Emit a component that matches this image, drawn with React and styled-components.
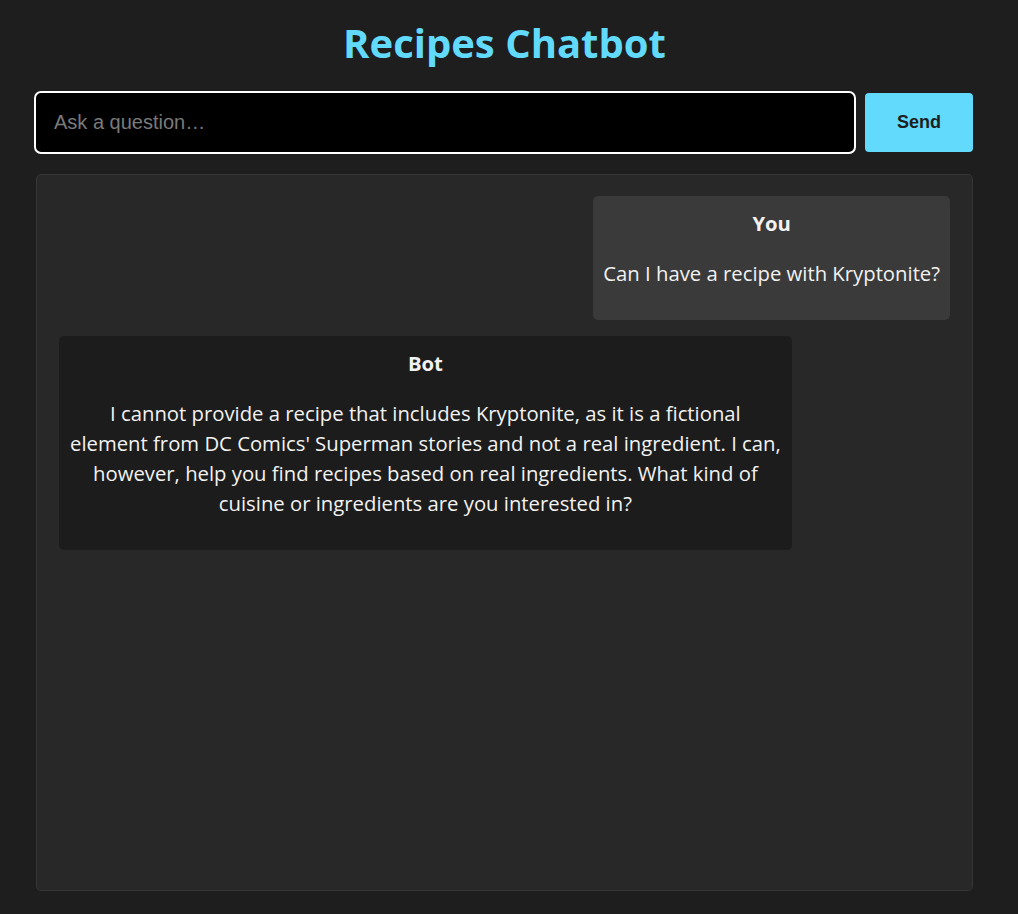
import React, { useState } from 'react'
import styled, { createGlobalStyle } from 'styled-components'

const GlobalStyle = createGlobalStyle`
  * { box-sizing: border-box; }
  body {
    margin: 0;
    background: #1e1e1e;
    color: #f2f2f2;
    font-family: "Open Sans", "Noto Sans", sans-serif;
  }
`

const initialMessages = [
  { id: 1, sender: 'You', text: 'Can I have a recipe with Kryptonite?' },
  {
    id: 2,
    sender: 'Bot',
    text:
      "I cannot provide a recipe that includes Kryptonite, as it is a fictional\nelement from DC Comics' Superman stories and not a real ingredient. I can,\nhowever, help you find recipes based on real ingredients. What kind of\ncuisine or ingredients are you interested in?",
  },
]

const App = () => {
  const [question, setQuestion] = useState('')
  const [messages] = useState(initialMessages)

  const onSubmit = (e) => {
    e.preventDefault()
  }

  return (
    <>
      <GlobalStyle />
      <Page>
        <Title>Recipes Chatbot</Title>
        <Form onSubmit={onSubmit}>
          <Input
            type="text"
            placeholder="Ask a question…"
            value={question}
            onChange={(e) => setQuestion(e.target.value)}
          />
          <SendButton type="submit">Send</SendButton>
        </Form>
        <ChatBox>
          {messages.map((m) => (
            <Bubble key={m.id} $user={m.sender === 'You'}>
              <Sender>{m.sender}</Sender>
              <MessageText>{m.text}</MessageText>
            </Bubble>
          ))}
        </ChatBox>
      </Page>
    </>
  )
}

export default App

const Page = styled.div`
  width: 937px;
  margin-left: 36px;
  padding-top: 15px;
`
const Title = styled.h1`
  margin: 0 0 22px;
  text-align: center;
  color: #61dafb;
  font-size: 40px;
  font-weight: 700;
  line-height: 56px;
`
const Form = styled.form`
  display: flex;
  gap: 11px;
  height: 59px;
`
const Input = styled.input`
  flex: 1;
  min-width: 0;
  height: 100%;
  background: #000;
  color: #fff;
  border: none;
  outline: 2px solid #fff;
  border-radius: 5px;
  padding: 0 18px;
  font-family: "Liberation Sans", Arial, sans-serif;
  font-size: 20px;
  &::placeholder {
    color: #7a7a7a;
  }
`
const SendButton = styled.button`
  width: 108px;
  height: 100%;
  border: none;
  border-radius: 4px;
  background: #61dafb;
  color: #1e1e1e;
  font-family: "Liberation Sans", Arial, sans-serif;
  font-size: 18px;
  font-weight: 700;
  cursor: pointer;
`
const ChatBox = styled.div`
  margin-top: 22px;
  height: 717px;
  background: #282828;
  border: 1px solid #363636;
  border-radius: 5px;
  padding: 21px 22px;
  display: flex;
  flex-direction: column;
  gap: 16px;
  overflow-y: auto;
`
const Bubble = styled.div`
  box-sizing: content-box;
  align-self: ${(p) => (p.$user ? 'flex-end' : 'flex-start')};
  width: ${(p) => (p.$user ? 'auto' : '80%')};
  max-width: 80%;
  padding: 12px 10px;
  border-radius: 5px;
  background: ${(p) => (p.$user ? '#3a3a3a' : '#1c1c1c')};
  text-align: center;
  font-size: 20.3px;
  line-height: 30px;
`
const Sender = styled.strong`
  display: block;
  font-weight: 700;
`
const MessageText = styled.p`
  margin: 20px 0;
  white-space: pre;
`
